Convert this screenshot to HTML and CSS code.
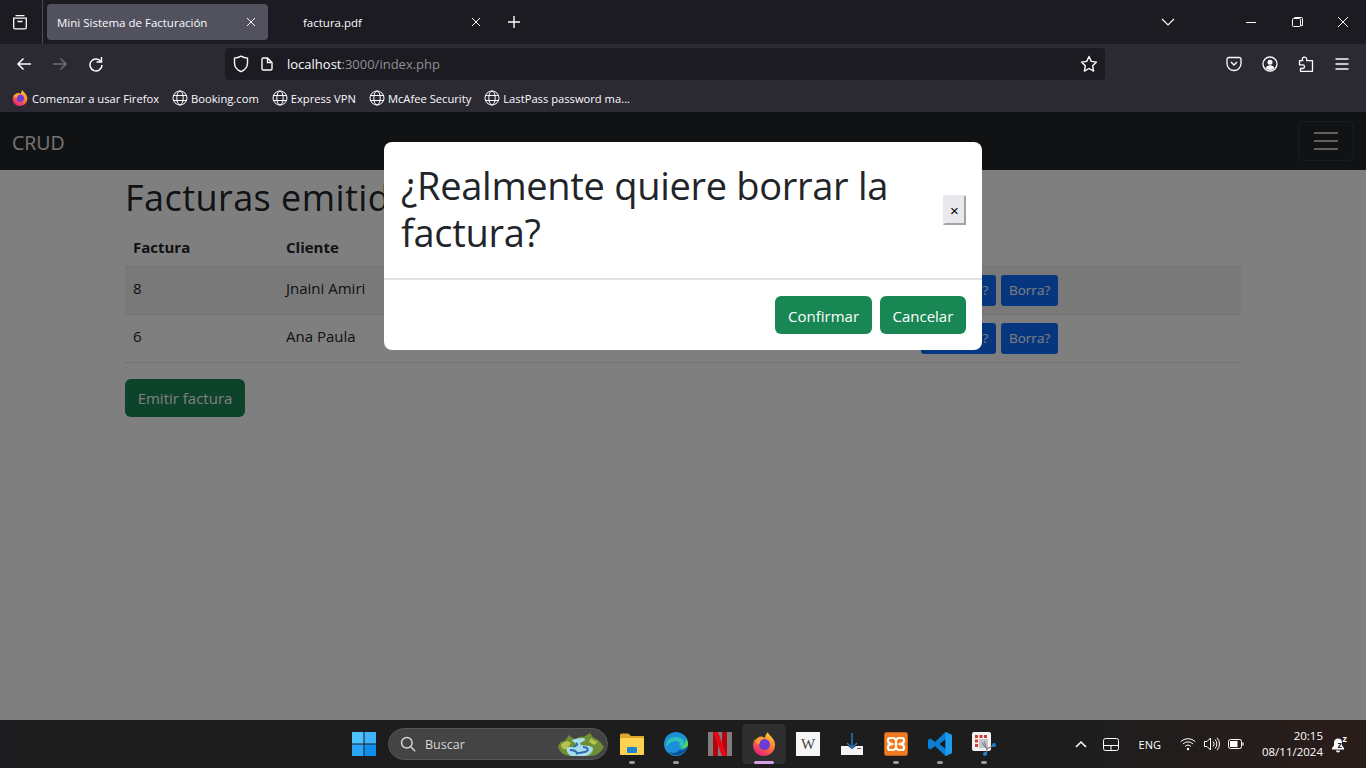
FILE: index.html
```html
<!DOCTYPE html>
<html lang="es">
<head>
    <meta charset="UTF-8">
    <meta name="viewport" content="width=device-width, initial-scale=1.0">
    <title>Mini Sistema de Facturación</title>
    <link rel="stylesheet" href="styles.css">
</head>
<body>
    <div class="tabbar">
        <div class="tab-list-btn">
            <svg width="16" height="16" viewBox="0 0 16 16" fill="none" stroke="#fbfbfe" stroke-width="1.3"><path d="M3.5 1.7h9M1.7 4.2h12.6v9a1.6 1.6 0 0 1-1.6 1.6H3.3a1.6 1.6 0 0 1-1.6-1.6zM5.5 7.5h5"/></svg>
        </div>
        <div class="tab tab-active">
            <span class="tab-title">Mini Sistema de Facturación</span>
            <svg class="tab-close" width="10" height="10" viewBox="0 0 10 10" stroke="#fbfbfe"><path d="M1 1l8 8M9 1l-8 8"/></svg>
        </div>
        <div class="tab tab-other">
            <span class="tab-title">factura.pdf</span>
            <svg class="tab-close" width="10" height="10" viewBox="0 0 10 10" stroke="#fbfbfe"><path d="M1 1l8 8M9 1l-8 8"/></svg>
        </div>
        <svg class="new-tab" width="14" height="14" viewBox="0 0 14 14" stroke="#fbfbfe" stroke-width="1.4"><path d="M7 1v12M1 7h12"/></svg>
        <div class="win-controls">
            <svg class="tabs-chevron" width="14" height="8" viewBox="0 0 14 8" fill="none" stroke="#fbfbfe" stroke-width="1.1"><path d="M1 1l6 6 6-6"/></svg>
            <svg class="win-btn" width="46" height="12" viewBox="0 0 46 12" fill="none" stroke="#fbfbfe"><path d="M18 6.500h10"/></svg>
            <svg class="win-btn" width="46" height="12" viewBox="0 0 46 12" fill="none" stroke="#fbfbfe"><rect x="18.500" y="2.500" width="8" height="8" rx="1"/><path d="M20.500 2.500v-1h7a1 1 0 0 1 1 1v7h-2"/></svg>
            <svg class="win-btn" width="46" height="12" viewBox="0 0 46 12" fill="none" stroke="#fbfbfe"><path d="M18 1l10 10M28 1L18 11"/></svg>
        </div>
    </div>

    <div class="toolbar">
        <div class="nav-btns">
            <svg width="16" height="16" viewBox="0 0 16 16" fill="none" stroke="#fbfbfe" stroke-width="1.5"><path d="M15 8H2M7.500 2.500L2 8l5.500 5.500"/></svg>
            <svg width="16" height="16" viewBox="0 0 16 16" fill="none" stroke="#6f6e75" stroke-width="1.5"><path d="M1 8h13M8.500 2.500L14 8l-5.500 5.500"/></svg>
            <svg width="16" height="16" viewBox="0 0 16 16" fill="none" stroke="#fbfbfe" stroke-width="1.5"><path d="M13.500 1v5h-5M13.200 6A6 6 0 1 0 14 9"/></svg>
        </div>
        <div class="urlbar">
            <svg width="16" height="18" viewBox="0 0 16 18" fill="none" stroke="#fbfbfe" stroke-width="1.4"><path d="M8 1.200c2 1.200 4.200 1.800 6.500 1.900v5c0 4-2.700 7-6.500 8.600C4.200 15.100 1.500 12.100 1.500 8.100v-5C3.800 3 6 2.400 8 1.200z"/></svg>
            <svg class="page-icon" width="12" height="14" viewBox="0 0 12 14" fill="none" stroke="#fbfbfe" stroke-width="1.4"><path d="M1 2.200A1.200 1.200 0 0 1 2.200 1h4.300L11 5.500v6.300a1.200 1.200 0 0 1-1.200 1.200H2.200A1.200 1.200 0 0 1 1 11.800zM6.500 1v4.500H11"/></svg>
            <span class="url-text">localhost<span class="url-dim">:3000/index.php</span></span>
            <svg class="star" width="18" height="18" viewBox="0 0 18 18" fill="none" stroke="#fbfbfe" stroke-width="1.4" stroke-linejoin="round"><path d="M9 1.500l2.300 4.900 5.200.7-3.800 3.700.9 5.300L9 13.500l-4.600 2.600.9-5.300L1.500 7.100l5.200-.7z"/></svg>
        </div>
        <div class="tool-icons">
            <svg width="16" height="16" viewBox="0 0 16 16" fill="none" stroke="#fbfbfe" stroke-width="1.3"><path d="M1 3.200A1.700 1.700 0 0 1 2.700 1.500h10.600A1.700 1.700 0 0 1 15 3.200v4.300a7 7 0 0 1-14 0zM5 6l3 3 3-3"/></svg>
            <svg width="16" height="16" viewBox="0 0 16 16" fill="none" stroke="#fbfbfe" stroke-width="1.3"><circle cx="8" cy="8" r="7"/><circle cx="8" cy="6.200" r="2.500" fill="#fbfbfe" stroke="none"/><path d="M3.500 12c1-2 2.500-2.800 4.500-2.800s3.500.8 4.500 2.800c-1.200 1.300-2.700 2-4.500 2s-3.300-.7-4.500-2z" fill="#fbfbfe" stroke="none"/></svg>
            <svg width="16" height="16" viewBox="0 0 16 16" fill="none" stroke="#fbfbfe" stroke-width="1.3" stroke-linejoin="round"><path d="M1.500 7.500V4.700h3.300a2.200 2.200 0 1 1 3.900-1.400v1.400h5.800v10.600H2.500v-2.800h2.200a1.800 1.800 0 1 0 0-3.600H1.500z"/></svg>
            <svg width="16" height="16" viewBox="0 0 16 16" fill="none" stroke="#fbfbfe" stroke-width="1.3"><path d="M1.500 3h13M1.500 8h13M1.500 13h13"/></svg>
        </div>
    </div>

    <div class="bookmarks">
        <div class="bookmark">
            <svg width="16" height="18" viewBox="0 0 24 26">
                <defs>
                    <linearGradient id="fox" x1="0.8" y1="0" x2="0.2" y2="1"><stop offset="0" stop-color="#ffd23f"/><stop offset=".45" stop-color="#ff7a2f"/><stop offset="1" stop-color="#e31587"/></linearGradient>
                </defs>
                <path d="M16 1c0 3 6 5 7 12 .5 6-4 12-11.500 12C6 25 1 20.500 1 14c0-2 .5-4 1.500-6l1 2.500C5 6 8 5 10 5.500c1.500.5 2 1 3 1.500C13 5 14 3 16 1z" fill="url(#fox)"/>
                <circle cx="12.500" cy="13.500" r="5.500" fill="#6b3cd6"/>
                <path d="M3 9.500c2-3.500 6-4.500 10-2.500-2 .5-4 1.500-5 4 0 2-1.500 2.500-3 2z" fill="#ff9a2f"/>
            </svg>
            <span>Comenzar a usar Firefox</span>
        </div>
        <div class="bookmark">
            <svg class="globe" width="16" height="16" viewBox="0 0 16 16"><circle cx="8" cy="8" r="7"/><ellipse cx="8" cy="8" rx="3.200" ry="7"/><path d="M1 5.500h14M1 10.500h14"/></svg>
            <span>Booking.com</span>
        </div>
        <div class="bookmark">
            <svg class="globe" width="16" height="16" viewBox="0 0 16 16"><circle cx="8" cy="8" r="7"/><ellipse cx="8" cy="8" rx="3.200" ry="7"/><path d="M1 5.500h14M1 10.500h14"/></svg>
            <span>Express VPN</span>
        </div>
        <div class="bookmark">
            <svg class="globe" width="16" height="16" viewBox="0 0 16 16"><circle cx="8" cy="8" r="7"/><ellipse cx="8" cy="8" rx="3.200" ry="7"/><path d="M1 5.500h14M1 10.500h14"/></svg>
            <span>McAfee Security</span>
        </div>
        <div class="bookmark">
            <svg class="globe" width="16" height="16" viewBox="0 0 16 16"><circle cx="8" cy="8" r="7"/><ellipse cx="8" cy="8" rx="3.200" ry="7"/><path d="M1 5.500h14M1 10.500h14"/></svg>
            <span>LastPass password ma...</span>
        </div>
    </div>

    <div class="viewport">
        <nav class="navbar">
            <span class="brand">CRUD</span>
            <button class="toggler"><span class="toggler-bars"></span></button>
        </nav>
        <main class="container">
            <h1 class="page-title">Facturas emitidas</h1>
            <table class="invoices">
                <thead>
                    <tr><th class="col-num">Factura</th><th class="col-client">Cliente</th><th class="col-total"></th><th></th></tr>
                </thead>
                <tbody>
                    <tr class="striped">
                        <td>8</td><td>Jnaini Amiri</td><td></td>
                        <td><button class="btn btn-blue btn-edit">Modifica?</button><button class="btn btn-blue">Borra?</button></td>
                    </tr>
                    <tr>
                        <td>6</td><td>Ana Paula</td><td></td>
                        <td><button class="btn btn-blue btn-edit">Modifica?</button><button class="btn btn-blue">Borra?</button></td>
                    </tr>
                </tbody>
            </table>
            <button class="btn-emit">Emitir factura</button>
        </main>
        <div class="backdrop"></div>
        <div class="modal">
            <div class="modal-header">
                <h2 class="modal-title">¿Realmente quiere borrar la factura?</h2>
                <button class="modal-x">×</button>
            </div>
            <div class="modal-footer">
                <button class="btn-green">Confirmar</button>
                <button class="btn-green">Cancelar</button>
            </div>
        </div>
    </div>

    <div class="taskbar">
        <svg class="start" width="24" height="24" viewBox="0 0 24 24"><rect width="11.500" height="11.500" fill="#4cc2ff"/><rect x="12.500" width="11.500" height="11.500" fill="#3fb4fa"/><rect y="12.500" width="11.500" height="11.500" fill="#2aa5f5"/><rect x="12.500" y="12.500" width="11.500" height="11.500" fill="#0f8fec"/></svg>
        <div class="search">
            <svg width="16" height="16" viewBox="0 0 16 16" fill="none" stroke="#d6d6d6" stroke-width="1.5"><circle cx="6.800" cy="6.800" r="5.300"/><path d="M10.800 10.800l4.400 4.400"/></svg>
            <span>Buscar</span>
            <svg class="search-art" width="46" height="24" viewBox="0 0 46 24">
                <path d="M0 15c1-4 3-6 6-6 2-1 3-4 5-6 2 2 4 4 7 4 3-2 5-3 7-2 3-1 5-3 7-4 2 3 3 5 6 6 3 1 6 5 8 8-3 5-7 9-13 9H13C6 24 2 20 0 15z" fill="#6d8f35"/>
                <path d="M3 13c2-3 4-3 7-4l3 2-4 6c-3 1-5 0-6-4zM33 6c2 2 4 3 7 4l-4 3-5-3z" fill="#b9c24a"/>
                <path d="M14 8c5-2 11-3 13-1 1 2-5 3-5 5 0 2 9 1 12 3s-1 9-8 9H13c-4-3-5-6-4-8s9 0 9-3-4-3-4-5z" fill="#a6dcec"/>
                <path d="M18 11c3 2 0 3-3 4M25 15c4 0 6 2 4 4s-8 1-11 3M12 18c3 0 6 1 7 3" fill="none" stroke="#2d6aa8" stroke-width="1.8"/>
            </svg>
        </div>
        <div class="task-apps">
            <div class="app">
                <svg width="24" height="22" viewBox="0 0 24 22"><path d="M0 2A1.500 1.500 0 0 1 1.500.5h7L11 3h13v4H0z" fill="#e0a52c"/><rect y="5" width="24" height="17" rx="1" fill="#ffd34f"/><rect x="7" y="14" width="10" height="6" rx="1" fill="#1f84d6"/></svg>
                <i class="dot"></i>
            </div>
            <div class="app">
                <svg width="24" height="24" viewBox="0 0 24 24"><circle cx="12" cy="12" r="12" fill="#1b90d8"/><path d="M24 13a12 12 0 0 1-20 7c5 2 10 1 11-2 4 1 7-1 9-5z" fill="#0b4f94"/><path d="M2 16C1 8 7 5 12 5c5 0 8 3 8 6s-3 4-5 3c2-2 0-5-3-5-5 0-8 3-10 7z" fill="#2fc1b5"/><path d="M22 6c2 3 2 6 2 7-1 3-5 4-8 3 3-1 6-5 6-10z" fill="#56d45c"/></svg>
                <i class="dot"></i>
            </div>
            <div class="app">
                <svg width="24" height="24" viewBox="0 0 24 24"><rect width="24" height="24" fill="#7d7d7d"/><path d="M5 0h5v24H5zM14 0h5v24h-5z" fill="#b1060f"/><path d="M5 0h5l9 24h-5z" fill="#e50914"/></svg>
            </div>
            <div class="app app-active">
                <svg width="24" height="26" viewBox="0 0 24 26"><path d="M16 1c0 3 6 5 7 12 .5 6-4 12-11.500 12C6 25 1 20.500 1 14c0-2 .5-4 1.500-6l1 2.500C5 6 8 5 10 5.500c1.500.5 2 1 3 1.500C13 5 14 3 16 1z" fill="url(#fox)"/><circle cx="12.500" cy="13.500" r="5.500" fill="#6b3cd6"/><path d="M3 9.500c2-3.500 6-4.500 10-2.500-2 .5-4 1.500-5 4 0 2-1.500 2.500-3 2z" fill="#ff9a2f"/></svg>
                <i class="dot dot-active"></i>
            </div>
            <div class="app">
                <span class="wiki">W</span>
            </div>
            <div class="app">
                <svg width="24" height="24" viewBox="0 0 24 24"><path d="M1 14h7l4 3 4-3h7v9H1z" fill="#f4f4f4"/><path d="M12 1v15M7 11l5 5 5-5" fill="none" stroke="#2a77b8" stroke-width="1.5"/><rect x="17" y="16" width="4" height="1" fill="#666"/></svg>
            </div>
            <div class="app">
                <svg width="24" height="24" viewBox="0 0 24 24"><rect width="24" height="24" rx="3" fill="#c95f12"/><rect x="1" y="1" width="22" height="22" rx="2" fill="#f27a20"/><path d="M6 6h3.500c1.500 0 2 1.500 2.500 2.500C12.500 7.500 13 6 14.500 6H18a2 2 0 0 1 2 2v1.500c0 1.500-2 2-3.500 2.500 1.500.5 3.500 1 3.500 2.500V16a2 2 0 0 1-2 2h-3.500c-1.500 0-2-1.500-2.500-2.500-.5 1-1 2.500-2.500 2.500H6a2 2 0 0 1-2-2v-1.500C4 13 6 12.500 7.500 12 6 11.500 4 11 4 9.500V8a2 2 0 0 1 2-2zM12 8.500v7" fill="none" stroke="#fff" stroke-width="2.200"/></svg>
                <i class="dot"></i>
            </div>
            <div class="app">
                <svg width="24" height="24" viewBox="0 0 24 24"><path d="M17.500 0L24 3v18l-6.500 3L7 14l-4.500 3.500L0 16V8l2.500-1.500L7 10zM17.500 7l-6 5 6 5z" fill="#0a7fd4"/><path d="M17.500 0L24 3v18l-6.500 3z" fill="#1f9cf0"/></svg>
                <i class="dot"></i>
            </div>
            <div class="app">
                <svg width="24" height="24" viewBox="0 0 24 24"><rect width="19" height="19" rx="2" fill="#f2f2f2"/><path d="M3 3h3v3H3zM7.500 3h3v3h-3zM12 3h3v3h-3zM3 7.500h3v3H3zM3 12h3v3H3z" fill="#d63b2e"/><rect x="7" y="7" width="9" height="9" fill="#c4c4cb"/><path d="M10 11l5 6 7-4M12 9l3 8-1 5" fill="none" stroke="#8b8b8b" stroke-width="1.2"/><circle cx="22" cy="13" r="2" fill="#1f84d6"/><circle cx="13" cy="22" r="2" fill="#1f84d6"/></svg>
                <i class="dot"></i>
            </div>
        </div>
        <div class="tray">
            <svg class="tray-chevron" width="12" height="8" viewBox="0 0 12 8" fill="none" stroke="#fff" stroke-width="1.5"><path d="M1 7l5-5 5 5"/></svg>
            <svg class="tray-pad" width="16" height="13" viewBox="0 0 16 13" fill="none" stroke="#fff"><rect x=".5" y=".5" width="15" height="12" rx="2"/><path d="M.5 7.500h15M8 7.500v5"/></svg>
            <span class="tray-lang">ENG</span>
            <svg class="tray-wifi" width="16" height="14" viewBox="0 0 16 14" fill="none" stroke="#fff"><path d="M.7 4.700a10.300 10.300 0 0 1 14.600 0M2.900 7a7.200 7.200 0 0 1 10.200 0M5.100 9.300a4.100 4.100 0 0 1 5.800 0"/><circle cx="8" cy="12" r="1.200" fill="#fff" stroke="none"/></svg>
            <svg class="tray-vol" width="16" height="14" viewBox="0 0 16 14" fill="none" stroke="#fff"><path d="M.5 4.500H3L6.500 1v12L3 9.500H.5zM9 4.500a3.500 3.500 0 0 1 0 5M11 2.500a6.500 6.500 0 0 1 0 9M13 .8a9 9 0 0 1 0 12.400"/></svg>
            <svg class="tray-bat" width="16" height="10" viewBox="0 0 16 10" fill="none" stroke="#fff"><rect x=".5" y=".5" width="13" height="9" rx="2"/><rect x="2" y="2" width="7.500" height="6" fill="#fff" stroke="none"/><path d="M15 3.500v3" stroke-width="1.2"/></svg>
            <div class="clock">
                <span>20:15</span>
                <span>08/11/2024</span>
            </div>
            <div class="bell">
                <svg width="14" height="17" viewBox="0 0 14 17"><path d="M7 2.500c-2.500 0-4 1.800-4 4v3L1 12v1.500h12V12l-2-2.500v-3c0-2.500-1.500-4-4-4z" fill="#fff"/><path d="M5 14.500h4a2 2 0 0 1-4 0z" fill="#fff"/></svg>
                <span class="bell-z-dark">z</span>
                <span class="bell-z">z</span>
            </div>
        </div>
    </div>
</body>
</html>
```

FILE: styles.css
```css
* {
    box-sizing: border-box;
}
body {
    margin: 0;
    height: 100vh;
    overflow: hidden;
    display: flex;
    flex-direction: column;
    font-family: 'Open Sans', 'Noto Sans', sans-serif;
    background-color: #808080;
}
svg {
    flex-shrink: 0;
    display: block;
}

/* barra de pestañas */
.tabbar {
    height: 44px;
    background-color: #1c1b22;
    display: flex;
    align-items: center;
    color: #fbfbfe;
    font-size: 11.5px;
}
.tab-list-btn {
    width: 43px;
    height: 44px;
    display: flex;
    align-items: center;
    padding-left: 12px;
    border-right: 1px solid #4a4a52;
}
.tab {
    width: 221px;
    height: 36px;
    display: flex;
    align-items: center;
    border-radius: 4px;
}
.tab-active {
    margin-left: 4px;
    background-color: #52525e;
    padding: 0 12px 0 10px;
}
.tab-other {
    padding: 0 8px 0 35px;
}
.tab-close {
    margin-left: auto;
}
.new-tab {
    margin-left: 18px;
}
.win-controls {
    margin-left: auto;
    display: flex;
    align-items: center;
}
.tabs-chevron {
    margin-right: 53px;
}
.win-btn {
    width: 46px;
}

/* barra de navegación */
.toolbar {
    height: 40px;
    background-color: #2b2a33;
    display: flex;
    align-items: center;
    color: #fbfbfe;
}
.nav-btns {
    width: 225px;
    display: flex;
    gap: 20px;
    padding-left: 16px;
}
.urlbar {
    width: 880px;
    height: 32px;
    background-color: #1c1b22;
    border-radius: 4px;
    display: flex;
    align-items: center;
    padding: 0 7px 0 8px;
    font-size: 13px;
}
.page-icon {
    margin-left: 12px;
}
.url-text {
    margin-left: 14px;
}
.url-dim {
    color: #8f8f94;
}
.star {
    margin-left: auto;
}
.tool-icons {
    display: flex;
    gap: 20px;
    margin-left: 121px;
}

/* marcadores */
.bookmarks {
    height: 28px;
    background-color: #2b2a33;
    display: flex;
    align-items: center;
    gap: 13px;
    padding-left: 12px;
    color: #fbfbfe;
    font-size: 11.2px;
}
.bookmark {
    display: flex;
    align-items: center;
    gap: 4px;
}
.globe {
    fill: none;
    stroke: #fbfbfe;
    stroke-width: 1;
    margin-right: -1px;
}

/* página */
.viewport {
    position: relative;
    flex: 1;
    overflow: hidden;
    background-color: #fff;
}
.navbar {
    height: 58px;
    background-color: #212529;
    display: flex;
    align-items: center;
    justify-content: space-between;
    padding: 0 12px;
}
.brand {
    font-size: 19.5px;
    color: #fff;
    opacity: .9;
    padding-top: 2px;
}
.toggler {
    width: 56px;
    height: 40px;
    background: none;
    border: 1px solid rgba(255, 255, 255, .1);
    border-radius: 6px;
    padding: 0;
    display: flex;
    align-items: center;
    justify-content: center;
}
.toggler-bars {
    width: 24px;
    height: 18px;
    border-top: 2px solid #c0c1c2;
    border-bottom: 2px solid #c0c1c2;
    background: linear-gradient(#c0c1c2, #c0c1c2) center / 100% 2px no-repeat;
}
.container {
    width: 1140px;
    margin: 0 auto;
    padding: 0 12px;
}
.page-title {
    margin: 6px 0 8px;
    font-size: 36px;
    font-weight: 400;
    line-height: 43px;
    letter-spacing: .45px;
    color: #212529;
    white-space: nowrap;
}
.invoices {
    width: 100%;
    border-collapse: collapse;
    font-size: 15px;
    color: #212529;
    margin-bottom: 16px;
}
.invoices th {
    text-align: left;
    font-weight: 700;
    height: 39px;
    padding: 2px 8px 0;
    border-bottom: 1px solid #dee2e6;
}
.invoices td {
    height: 48px;
    padding: 8px 8px 0;
    line-height: 26px;
    vertical-align: top;
    border-bottom: 1px solid #dee2e6;
}
.col-num {
    width: 153px;
}
.col-client {
    width: 300px;
}
.col-total {
    width: 335px;
}
.striped td {
    background-color: #f2f2f2;
}
.btn {
    border: none;
    border-radius: 3px;
    font: inherit;
    font-size: 13.5px;
    line-height: 31px;
    height: 31px;
    padding: 0 8px;
    color: #fff;
    vertical-align: top;
}
.btn-blue {
    background-color: #0d6efd;
}
.btn-edit {
    width: 75px;
    margin-right: 5px;
    padding: 0;
}
.btn-emit {
    width: 120px;
    height: 38px;
    border: none;
    border-radius: 6px;
    background-color: #198754;
    color: #fff;
    font: inherit;
    font-size: 15px;
}
.backdrop {
    position: absolute;
    inset: 0;
    background-color: rgba(0, 0, 0, .5);
}
.modal {
    position: absolute;
    left: 384px;
    top: 30px;
    width: 598px;
    background-color: #fff;
    border-radius: 8px;
}
.modal-header {
    height: 138px;
    padding: 0 16px 0 17px;
    display: flex;
    align-items: center;
    border-bottom: 2px solid #dee2e6;
}
.modal-title {
    margin: 0 0 2px;
    flex: 1;
    font-size: 38px;
    font-weight: 400;
    line-height: 47px;
    letter-spacing: -.3px;
    color: #212529;
}
.modal-x {
    width: 23px;
    height: 30px;
    padding: 0;
    font-size: 15px;
    background-color: #e9e9ed;
    border-style: solid;
    border-width: 2px;
    border-color: #e9e9ed #a3a3a3 #a3a3a3 #e9e9ed;
    color: #000;
}
.modal-footer {
    height: 70px;
    padding: 0 16px;
    display: flex;
    align-items: center;
    justify-content: flex-end;
    gap: 8px;
}
.btn-green {
    height: 38px;
    padding: 1px 12.7px 0;
    border: none;
    border-radius: 6px;
    background-color: #198754;
    color: #fff;
    font: inherit;
    font-size: 15px;
}

/* barra de tareas */
.taskbar {
    height: 48px;
    background: linear-gradient(90deg, #1d1c1e 0%, #1e1d1d 80%, #2a1d1a 100%);
    display: flex;
    align-items: center;
    padding-left: 352px;
    color: #fff;
}
.search {
    width: 220px;
    height: 32px;
    margin-left: 12px;
    background-color: #444;
    border-radius: 16px;
    border: 1px solid #555;
    display: flex;
    align-items: center;
    gap: 9px;
    padding: 0 3px 0 11px;
    font-size: 12.5px;
    color: #d6d6d6;
}
.search-art {
    margin-left: auto;
}
.task-apps {
    display: flex;
    margin-left: 2px;
}
.app {
    position: relative;
    width: 44px;
    height: 40px;
    display: flex;
    align-items: center;
    justify-content: center;
    border-radius: 4px;
}
.app-active {
    background-color: #2e2e2e;
}
.dot {
    position: absolute;
    left: 19px;
    bottom: 0;
    width: 6px;
    height: 3px;
    border-radius: 2px;
    background-color: #9a9a9a;
}
.dot-active {
    left: 12px;
    width: 20px;
    background-color: #d9a0ea;
}
.wiki {
    width: 24px;
    height: 24px;
    background-color: #f6f6f6;
    color: #444;
    font-family: 'Liberation Serif', serif;
    font-size: 15px;
    text-align: center;
    line-height: 24px;
}
.tray {
    margin-left: auto;
    display: flex;
    align-items: center;
    padding-right: 21px;
}
.tray-chevron {
    margin-right: 16px;
}
.tray-pad {
    margin-right: 20px;
}
.tray-lang {
    font-size: 11px;
    margin-right: 19px;
}
.tray-wifi,
.tray-vol {
    margin-right: 8px;
}
.clock {
    margin-left: 18px;
    display: flex;
    flex-direction: column;
    align-items: flex-end;
    font-size: 11.5px;
    line-height: 16px;
}
.bell {
    position: relative;
    margin-left: 8px;
}
.bell-z,
.bell-z-dark {
    position: absolute;
    font-size: 9px;
    line-height: 9px;
    font-weight: 700;
}
.bell-z {
    right: -2px;
    top: -2px;
}
.bell-z-dark {
    right: 3px;
    top: 4px;
    color: #222;
}
```
